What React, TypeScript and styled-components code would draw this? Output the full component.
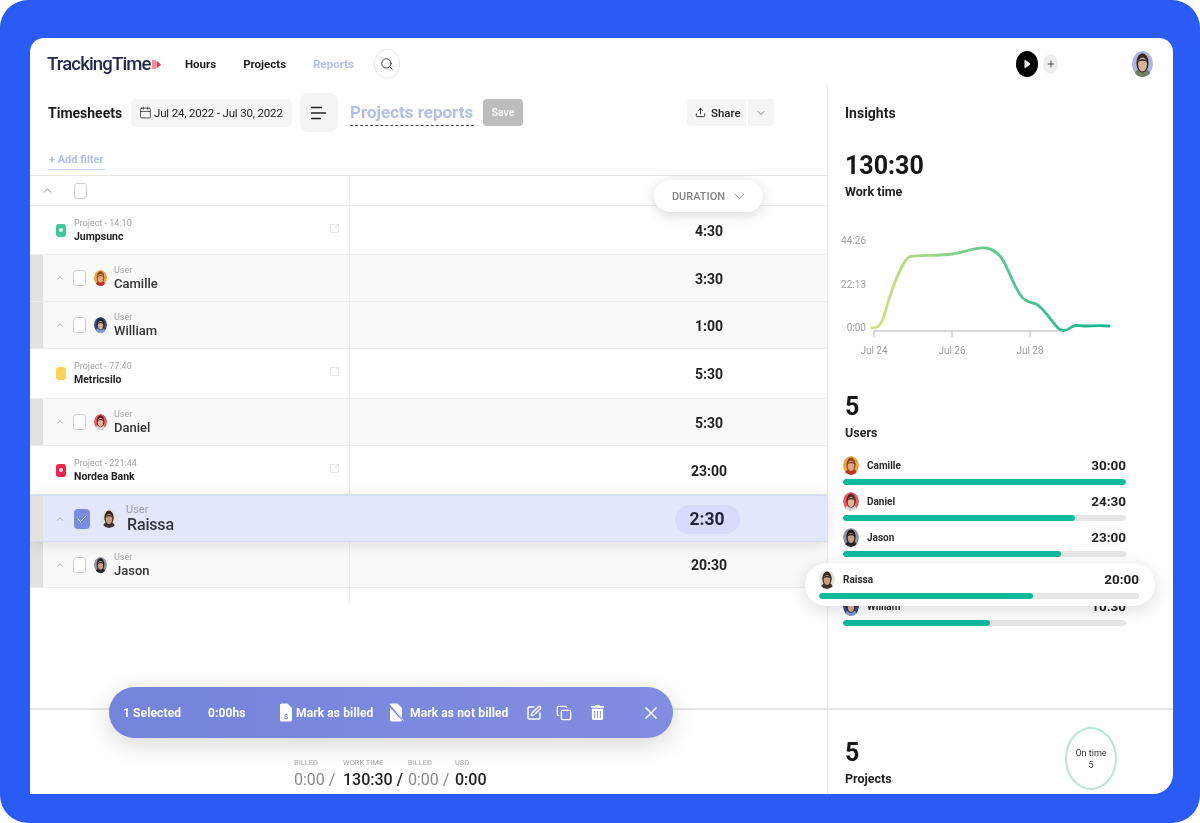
import * as React from 'react';
import styled, { createGlobalStyle } from 'styled-components';
import {
  Calendar,
  Check,
  ChevronDown,
  ChevronUp,
  Copy,
  Plus,
  Search,
  SquareArrowOutUpRight,
  SquarePen,
  Upload,
  X,
} from 'lucide-react';
import { FaTrashAlt } from 'react-icons/fa';

const GlobalStyle = createGlobalStyle`
  html, body { margin: 0; padding: 0; background: #fff; }
  body { font-family: 'Roboto', 'Liberation Sans', sans-serif; }
  * { box-sizing: border-box; }
`;

type Face = { bg: string; skin: string; hair: string; shirt: string };

const faces: Record<string, Face> = {
  camille: { bg: '#f0a63a', skin: '#e0a585', hair: '#8a4a22', shirt: '#b8352c' },
  william: { bg: '#34497c', skin: '#d9a98f', hair: '#1d1d2b', shirt: '#7f9bd0' },
  daniel: { bg: '#f0586a', skin: '#e2b39b', hair: '#4a2b20', shirt: '#d8d4d0' },
  raissa: { bg: '#e2e1dc', skin: '#c99a7c', hair: '#33261f', shirt: '#3c3330' },
  jason: { bg: '#8b929c', skin: '#c79c84', hair: '#1f1b1a', shirt: '#27282c' },
  me: { bg: '#a9b6e6', skin: '#dcb49c', hair: '#3a2a25', shirt: '#6f7f68' },
};

function Avatar({ face }: { face: string }) {
  const f = faces[face];
  return (
    <svg viewBox="0 0 24 24" width="100%" height="100%" preserveAspectRatio="none">
      <circle cx="12" cy="12" r="12" fill={f.bg} />
      <path d="M3 24c0-6 4-8 9-8s9 2 9 8z" fill={f.shirt} />
      <ellipse cx="12" cy="11" rx="7" ry="9" fill={f.hair} />
      <ellipse cx="12" cy="12.500" rx="5" ry="6.500" fill={f.skin} />
      <path d="M7 10c1-3.500 9-3.500 10 0-3.300-1.300-6.700-1.300-10 0z" fill={f.hair} />
    </svg>
  );
}

function LogoMark() {
  return (
    <svg width="9" height="11" viewBox="0 0 9 11">
      <rect x="0" y="1" width="4" height="9" rx="1" fill="#f58f9c" />
      <path d="M4.500 1.500 9 5.500l-4.500 4z" fill="#e8404f" />
    </svg>
  );
}

function MenuLines() {
  return (
    <svg width="16" height="14" viewBox="0 0 16 14">
      <path d="M0 1.500h11M0 7h15M0 12.500h10" stroke="#222" strokeWidth="1.700" fill="none" />
    </svg>
  );
}

function PlayGlyph() {
  return (
    <svg width="7" height="10" viewBox="0 0 7 10">
      <path d="M1 1l5 4-5 4z" fill="#fff" stroke="#fff" strokeLinejoin="round" />
    </svg>
  );
}

function BilledDoc({ crossed }: { crossed?: boolean }) {
  return (
    <svg width="15" height="19" viewBox="0 0 15 19">
      <path d="M2.500 0.500h6l4.500 4.500v12a1.500 1.500 0 0 1-1.500 1.500h-9A1.500 1.500 0 0 1 1 17V2A1.500 1.500 0 0 1 2.500 0.500z" fill="#fff" />
      {crossed ? (
        <>
          <path d="M0 2l15 16" stroke="#7b88dd" strokeWidth="2.200" />
          <path d="M0.500 0.500l14 17" stroke="#fff" strokeWidth="0.800" />
        </>
      ) : (
        <text x="7" y="15.500" fontSize="8" fontWeight="700" textAnchor="middle" fill="#7b88dd" fontFamily="Roboto, sans-serif">
          $
        </text>
      )}
    </svg>
  );
}

function WorkChart() {
  return (
    <svg width="287" height="135" viewBox="-5 0 287 135">
      <defs>
        <linearGradient id="workLine" x1="0" y1="0" x2="1" y2="0">
          <stop offset="0" stopColor="#d2e27f" />
          <stop offset="0.5" stopColor="#63c98e" />
          <stop offset="1" stopColor="#12b594" />
        </linearGradient>
      </defs>
      <g fontSize="10" fill="#a0a0a0" fontFamily="Roboto, sans-serif">
        <text x="22" y="14" textAnchor="end">44:26</text>
        <text x="22" y="58" textAnchor="end">22:13</text>
        <text x="22" y="101" textAnchor="end">0:00</text>
        <text x="30" y="124" textAnchor="middle">Jul 24</text>
        <text x="108" y="124" textAnchor="middle">Jul 26</text>
        <text x="186" y="124" textAnchor="middle">Jul 28</text>
      </g>
      <path d="M30 101H216M30 101v6M108 101v6M186 101v6" stroke="#b5b5b5" strokeWidth="1" fill="none" />
      <path
        d="M28 98C34 98 37 95 40 86C44 72 47 62 51 52C55 42 59 32 65 27C70 25 95 26 108 24C122 22 130 17 142 18C150 19 156 25 160 32C166 43 171 59 178 67C182 72 186 72 192 74C200 78 206 90 214 98C218 102 222 101 226 98C230 95 232 95 240 96C248 96 256 95 265 96"
        stroke="url(#workLine)"
        strokeWidth="2.800"
        strokeLinecap="round"
        fill="none"
      />
    </svg>
  );
}

type RowData =
  | { kind: 'project'; meta: string; name: string; swatch: string; dot?: boolean; time: string; height: number }
  | { kind: 'user'; face: string; name: string; time: string; height: number };

const rows: RowData[] = [
  { kind: 'project', meta: 'Project - 14:10', name: 'Jumpsunc', swatch: '#3fc596', dot: true, time: '4:30', height: 49 },
  { kind: 'user', face: 'camille', name: 'Camille', time: '3:30', height: 47 },
  { kind: 'user', face: 'william', name: 'William', time: '1:00', height: 47 },
  { kind: 'project', meta: 'Project - 77:40', name: 'Metricsilo', swatch: '#fbd25c', time: '5:30', height: 50 },
  { kind: 'user', face: 'daniel', name: 'Daniel', time: '5:30', height: 47 },
  { kind: 'project', meta: 'Project - 221:44', name: 'Nordea Bank', swatch: '#f0244e', dot: true, time: '23:00', height: 49 },
];

const insightUsers = [
  { face: 'camille', name: 'Camille', time: '30:00', pct: 100 },
  { face: 'daniel', name: 'Daniel', time: '24:30', pct: 82 },
  { face: 'jason', name: 'Jason', time: '23:00', pct: 77 },
];

function UserCells({ face, name }: { face: string; name: string }) {
  return (
    <NameCell $user>
      <Strip />
      <SmallChevron><ChevronUp size={10} strokeWidth={1.5} /></SmallChevron>
      <Checkbox />
      <RowAvatar><Avatar face={face} /></RowAvatar>
      <Labels>
        <Meta>User</Meta>
        <UserName>{name}</UserName>
      </Labels>
    </NameCell>
  );
}

export default function App() {
  return (
    <>
      <GlobalStyle />
      <Frame>
        <Card>
          <TopBar>
            <Brand>
              <LogoText>TrackingTime</LogoText>
              <LogoMark />
            </Brand>
            <Nav>
              <NavLink>Hours</NavLink>
              <NavLink>Projects</NavLink>
              <NavLink $muted>Reports</NavLink>
            </Nav>
            <SearchButton><Search size={14} strokeWidth={1.6} /></SearchButton>
            <TopRight>
              <PlayButton><PlayGlyph /></PlayButton>
              <PlusChip><Plus size={10} strokeWidth={2} /></PlusChip>
              <MeAvatar><Avatar face="me" /></MeAvatar>
            </TopRight>
          </TopBar>

          <Body>
            <Main>
              <Toolbar>
                <PageTitle>Timesheets</PageTitle>
                <DatePill>
                  <Calendar size={13} strokeWidth={1.4} />
                  Jul 24, 2022 - Jul 30, 2022
                </DatePill>
                <MenuButton><MenuLines /></MenuButton>
                <ReportTitle>Projects reports</ReportTitle>
                <SaveButton>Save</SaveButton>
                <ShareGroup>
                  <ShareButton><Upload size={11} strokeWidth={2} /> Share</ShareButton>
                  <ShareCaret><ChevronDown size={12} strokeWidth={1.5} /></ShareCaret>
                </ShareGroup>
              </Toolbar>
              <FilterLine>
                <AddFilter>+ Add filter</AddFilter>
              </FilterLine>

              <HeadRow>
                <HeadCell>
                  <ChevronUp size={13} strokeWidth={1.5} color="#777" />
                  <Checkbox />
                </HeadCell>
                <DurationPill>
                  DURATION <ChevronDown size={17} strokeWidth={1.4} />
                </DurationPill>
              </HeadRow>

              {rows.map((row) => (
                <Row key={row.name} $user={row.kind === 'user'} $height={row.height}>
                  {row.kind === 'project' ? (
                    <NameCell>
                      <Swatch $color={row.swatch}>{row.dot && <SwatchDot />}</Swatch>
                      <Labels>
                        <Meta>{row.meta}</Meta>
                        <ProjectName>{row.name}</ProjectName>
                      </Labels>
                      <OpenLink><SquareArrowOutUpRight size={11} strokeWidth={1.3} /></OpenLink>
                    </NameCell>
                  ) : (
                    <UserCells face={row.face} name={row.name} />
                  )}
                  <Duration>{row.time}</Duration>
                </Row>
              ))}

              <SelectedRow>
                <SelectedName>
                  <Strip />
                  <SmallChevron><ChevronUp size={10} strokeWidth={1.5} /></SmallChevron>
                  <CheckedBox><Check size={12} strokeWidth={2} color="#fff" /></CheckedBox>
                  <SelectedAvatar><Avatar face="raissa" /></SelectedAvatar>
                  <Labels>
                    <SelectedMeta>User</SelectedMeta>
                    <SelectedUser>Raissa</SelectedUser>
                  </Labels>
                </SelectedName>
                <Duration><TimePill>2:30</TimePill></Duration>
              </SelectedRow>

              <Row $user $height={46}>
                <UserCells face="jason" name="Jason" />
                <Duration>20:30</Duration>
              </Row>
              <TableTail />

              <Footer>
                <TotalLabel>BILLED</TotalLabel>
                <TotalLabel>WORK TIME</TotalLabel>
                <TotalLabel>BILLED</TotalLabel>
                <TotalLabel>USD</TotalLabel>
                <TotalValue $dim>0:00 /</TotalValue>
                <TotalValue>130:30 /</TotalValue>
                <TotalValue $dim>0:00 /</TotalValue>
                <TotalValue>0:00</TotalValue>
              </Footer>

              <SelectionBar>
                <BarText $width={85}>1 Selected</BarText>
                <BarText $width={71}>0:00hs</BarText>
                <BarAction $width={110} $gap={2}><BilledDoc /> Mark as billed</BarAction>
                <BarAction $width={137} $gap={6}><BilledDoc crossed /> Mark as not billed</BarAction>
                <BarIcon $width={30}><SquarePen size={16} strokeWidth={2.2} /></BarIcon>
                <BarIcon $width={34}><Copy size={16} strokeWidth={2} /></BarIcon>
                <BarIcon $width={51}><FaTrashAlt size={15} /></BarIcon>
                <BarIcon $width={20}><X size={20} strokeWidth={2} /></BarIcon>
              </SelectionBar>
            </Main>

            <Side>
              <SideTop>
                <SideTitle>Insights</SideTitle>
                <BigTime>130:30</BigTime>
                <SubLabel>Work time</SubLabel>
                <ChartBox><WorkChart /></ChartBox>
                <BigCount>5</BigCount>
                <SubLabel>Users</SubLabel>
                <UserList>
                  {insightUsers.map((u) => (
                    <UserStat key={u.name}>
                      <StatLine>
                        <StatAvatar><Avatar face={u.face} /></StatAvatar>
                        <StatName>{u.name}</StatName>
                        <StatTime>{u.time}</StatTime>
                      </StatLine>
                      <Track><Fill style={{ width: `${u.pct}%` }} /></Track>
                    </UserStat>
                  ))}
                  <RaisedSlot>
                    <RaisedCard>
                      <StatLine>
                        <StatAvatar><Avatar face="raissa" /></StatAvatar>
                        <StatName>Raissa</StatName>
                        <StatTime>20:00</StatTime>
                      </StatLine>
                      <Track><Fill style={{ width: '67%' }} /></Track>
                    </RaisedCard>
                  </RaisedSlot>
                  <UserStat>
                    <StatLine>
                      <StatAvatar><Avatar face="william" /></StatAvatar>
                      <StatName>William</StatName>
                      <StatTime>10:30</StatTime>
                    </StatLine>
                    <Track><Fill style={{ width: '52%' }} /></Track>
                  </UserStat>
                </UserList>
              </SideTop>
              <SideBottom>
                <div>
                  <BigCount>5</BigCount>
                  <SubLabel>Projects</SubLabel>
                </div>
                <OnTime>On time<br />5</OnTime>
              </SideBottom>
            </Side>
          </Body>
        </Card>
      </Frame>
    </>
  );
}

const Frame = styled.div`
  width: 1200px;
  height: 823px;
  padding: 38px 27px 29px 30px;
  background: #2a5bf5;
  border-radius: 28px;
  overflow: hidden;
  filter: blur(0.4px);
`;
const Card = styled.div`
  display: flex;
  flex-direction: column;
  height: 100%;
  background: #fff;
  border-radius: 14px 14px 20px 0;
  overflow: hidden;
  color: #222;
`;
const TopBar = styled.div`
  flex: none;
  display: flex;
  align-items: center;
  height: 46px;
  padding: 6px 20px 0 17px;
`;
const Brand = styled.div`
  display: flex;
  align-items: center;
  gap: 1px;
  width: 138px;
`;
const LogoText = styled.span`
  font-size: 18.500px;
  font-weight: 500;
  letter-spacing: -0.045em;
  color: #262a4a;
`;
const Nav = styled.nav`
  display: flex;
  gap: 27px;
  width: 189px;
`;
const NavLink = styled.span<{ $muted?: boolean }>`
  font-size: 11.500px;
  font-weight: 700;
  color: ${(p) => (p.$muted ? '#b4bee9' : '#1c1c1c')};
`;
const SearchButton = styled.div`
  display: flex;
  align-items: center;
  justify-content: center;
  width: 26px;
  height: 30px;
  border: 1px solid #e8e8e8;
  border-radius: 50%;
  color: #333;
`;
const TopRight = styled.div`
  display: flex;
  align-items: center;
  margin-left: auto;
`;
const PlayButton = styled.div`
  display: flex;
  align-items: center;
  justify-content: center;
  width: 22px;
  height: 26px;
  border-radius: 50%;
  background: #000;
`;
const PlusChip = styled.div`
  display: flex;
  align-items: center;
  justify-content: center;
  width: 15px;
  height: 20px;
  margin: 0 74px 0 5px;
  border-radius: 50%;
  background: #eee;
  color: #333;
`;
const MeAvatar = styled.div`
  width: 21px;
  height: 26px;
  border-radius: 50%;
  overflow: hidden;
`;
const Body = styled.div`
  flex: 1;
  min-height: 0;
  display: grid;
  grid-template-columns: 797px 346px;
`;
const Main = styled.div`
  position: relative;
  display: flex;
  flex-direction: column;
`;
const Toolbar = styled.div`
  flex: none;
  display: flex;
  align-items: center;
  height: 57px;
  padding: 0 53px 0 18px;
`;
const PageTitle = styled.h1`
  width: 83px;
  margin: 0;
  font-size: 14px;
  font-weight: 700;
  color: #1b1b1b;
`;
const DatePill = styled.div`
  display: flex;
  align-items: center;
  gap: 2px;
  width: 161px;
  height: 28px;
  padding-left: 8px;
  border-radius: 5px;
  background: #f5f5f6;
  font-size: 11.500px;
  letter-spacing: -0.015em;
  white-space: nowrap;
  color: #222;
`;
const MenuButton = styled.div`
  display: flex;
  align-items: center;
  justify-content: center;
  width: 38px;
  height: 39px;
  margin: 0 12px 0 8px;
  border-radius: 8px;
  background: #f4f4f5;
`;
const ReportTitle = styled.div`
  width: 124px;
  height: 27px;
  margin-right: 9px;
  border-bottom: 1px dashed #444;
  font-size: 17px;
  line-height: 26px;
  font-weight: 700;
  white-space: nowrap;
  color: #b4bee9;
`;
const SaveButton = styled.div`
  display: flex;
  align-items: center;
  justify-content: center;
  width: 40px;
  height: 27px;
  border-radius: 4px;
  background: #bdbdbd;
  font-size: 10.500px;
  font-weight: 700;
  color: #f4f4f4;
`;
const ShareGroup = styled.div`
  display: flex;
  gap: 2px;
  margin-left: auto;
`;
const ShareButton = styled.div`
  display: flex;
  align-items: center;
  gap: 5px;
  width: 59px;
  height: 27px;
  padding-left: 8px;
  border-radius: 4px 0 0 4px;
  background: #f5f5f6;
  font-size: 11.500px;
  font-weight: 500;
  color: #222;
`;
const ShareCaret = styled.div`
  display: flex;
  align-items: center;
  justify-content: center;
  width: 26px;
  height: 27px;
  border-radius: 0 4px 4px 0;
  background: #f5f5f6;
  color: #555;
`;
const FilterLine = styled.div`
  flex: none;
  height: 34px;
  padding: 7px 0 0 18px;
`;
const AddFilter = styled.span`
  display: inline-block;
  padding: 0 1px 3px 1px;
  border-bottom: 1px solid #c3cbee;
  font-size: 11px;
  line-height: 13px;
  font-weight: 700;
  color: #b4bee9;
`;
const HeadRow = styled.div`
  position: relative;
  flex: none;
  height: 31px;
  border-top: 1px solid #e6e6e6;
  border-bottom: 1px solid #ececec;
`;
const HeadCell = styled.div`
  display: flex;
  align-items: center;
  gap: 20px;
  width: 320px;
  height: 100%;
  padding-left: 11px;
  border-right: 1px solid #ececec;
`;
const DurationPill = styled.div`
  position: absolute;
  top: 4px;
  left: 624px;
  z-index: 2;
  display: flex;
  align-items: center;
  justify-content: center;
  gap: 6px;
  width: 109px;
  height: 32px;
  padding-left: 3px;
  border-radius: 16px;
  background: #fff;
  box-shadow: 0 3px 14px rgba(0, 0, 0, 0.16);
  font-size: 11px;
  font-weight: 500;
  color: #858585;
`;
const Row = styled.div<{ $user?: boolean; $height: number }>`
  flex: none;
  display: grid;
  grid-template-columns: 320px 1fr;
  height: ${(p) => p.$height}px;
  background: ${(p) => (p.$user ? '#f9f9f9' : '#fff')};
  border-bottom: 1px solid #ececec;
`;
const NameCell = styled.div<{ $user?: boolean }>`
  display: flex;
  align-items: center;
  padding-left: ${(p) => (p.$user ? '0' : '26px')};
  border-right: 1px solid #ececec;
`;
const Strip = styled.div`
  flex: none;
  align-self: stretch;
  width: 13px;
  margin-right: 11px;
  background: #e2e2e2;
`;
const SmallChevron = styled.div`
  display: flex;
  width: 19px;
  padding-left: 1px;
  color: #888;
`;
const Checkbox = styled.div`
  flex: none;
  width: 13px;
  height: 16px;
  border: 1px solid #cfcfcf;
  border-radius: 3px;
  background: #fff;
`;
const RowAvatar = styled.div`
  flex: none;
  width: 13px;
  height: 16px;
  margin: 0 7px 0 8px;
  border-radius: 50%;
  overflow: hidden;
`;
const Labels = styled.div`
  display: flex;
  flex-direction: column;
`;
const Meta = styled.span`
  font-size: 9px;
  line-height: 11px;
  color: #a3a3a3;
`;
const UserName = styled.span`
  font-size: 13px;
  line-height: 15px;
  font-weight: 500;
  color: #333;
`;
const ProjectName = styled.span`
  margin-top: 2px;
  font-size: 10.500px;
  line-height: 12px;
  font-weight: 700;
  color: #222;
`;
const Swatch = styled.div<{ $color: string }>`
  flex: none;
  display: flex;
  align-items: center;
  justify-content: center;
  width: 10px;
  height: 13px;
  margin-right: 8px;
  border-radius: 3px;
  background: ${(p) => p.$color};
`;
const SwatchDot = styled.div`
  width: 4px;
  height: 4px;
  border-radius: 50%;
  background: rgba(255, 255, 255, 0.85);
`;
const OpenLink = styled.div`
  display: flex;
  margin: -4px 9px 0 auto;
  color: #cfcfcf;
`;
const Duration = styled.div`
  display: flex;
  align-items: center;
  justify-content: center;
  padding: 1px 0 0 241px;
  font-size: 14px;
  font-weight: 700;
  color: #222;
`;
const SelectedRow = styled.div`
  position: relative;
  z-index: 1;
  flex: none;
  display: grid;
  grid-template-columns: 320px 1fr;
  height: 47px;
  background: #e3e7fb;
  border-top: 1px solid #d6dbf5;
  border-bottom: 1px solid #d6dbf5;
  box-shadow: 0 2px 14px rgba(0, 0, 0, 0.12);
`;
const SelectedName = styled.div`
  display: flex;
  align-items: center;
`;
const CheckedBox = styled.div`
  flex: none;
  display: flex;
  align-items: center;
  justify-content: center;
  width: 16px;
  height: 20px;
  margin-left: 1px;
  border-radius: 4px;
  background: #7b8cde;
`;
const SelectedAvatar = styled.div`
  flex: none;
  width: 16px;
  height: 19px;
  margin: 0 9px 0 11px;
  border-radius: 50%;
  overflow: hidden;
`;
const SelectedMeta = styled.span`
  font-size: 11px;
  line-height: 13px;
  color: #9a9cab;
`;
const SelectedUser = styled.span`
  padding-left: 1px;
  font-size: 16px;
  line-height: 18px;
  font-weight: 500;
  letter-spacing: -0.01em;
  color: #33363f;
`;
const TimePill = styled.span`
  display: flex;
  align-items: center;
  justify-content: center;
  width: 65px;
  height: 29px;
  margin-right: 4px;
  border-radius: 15px;
  background: #d6dcf9;
  font-size: 17.500px;
  font-weight: 700;
  color: #1f2540;
`;
const TableTail = styled.div`
  flex: none;
  width: 320px;
  height: 17px;
  border-right: 1px solid #ececec;
`;
const Footer = styled.div`
  flex: none;
  display: grid;
  grid-template-columns: 49px 65px 47px auto;
  align-content: end;
  height: 86px;
  margin-top: auto;
  padding: 0 0 4px 264px;
  border-top: 2px solid #e6e6e6;
`;
const TotalLabel = styled.span`
  font-size: 7.500px;
  line-height: 11px;
  color: #a6a6a6;
`;
const TotalValue = styled.span<{ $dim?: boolean }>`
  margin-top: 2px;
  font-size: 16px;
  line-height: 20px;
  font-weight: ${(p) => (p.$dim ? 400 : 500)};
  white-space: nowrap;
  color: ${(p) => (p.$dim ? '#8a8a8a' : '#222')};
`;
const SelectionBar = styled.div`
  position: absolute;
  left: 79px;
  top: 603px;
  z-index: 3;
  display: flex;
  align-items: center;
  width: 564px;
  height: 51px;
  padding-left: 14px;
  border-radius: 26px;
  background: linear-gradient(90deg, #7484db, #818de0);
  box-shadow: 0 6px 24px rgba(0, 0, 0, 0.16);
  color: #fff;
`;
const BarText = styled.span<{ $width: number }>`
  width: ${(p) => p.$width}px;
  font-size: 12px;
  font-weight: 700;
  letter-spacing: 0.01em;
`;
const BarAction = styled(BarText)<{ $gap: number }>`
  display: flex;
  align-items: center;
  gap: ${(p) => p.$gap}px;
  white-space: nowrap;
`;
const BarIcon = styled.div<{ $width: number }>`
  display: flex;
  width: ${(p) => p.$width}px;
`;
const Side = styled.aside`
  display: flex;
  flex-direction: column;
  border-left: 1px solid #ececec;
`;
const SideTop = styled.div`
  flex: 1;
  min-height: 0;
  padding: 21px 46px 0 17px;
`;
const SideTitle = styled.h2`
  margin: 0 0 30px;
  font-size: 14px;
  line-height: 17px;
  font-weight: 700;
  color: #1f1f1f;
`;
const BigTime = styled.div`
  font-size: 25px;
  line-height: 28px;
  font-weight: 700;
  color: #161616;
`;
const BigCount = styled(BigTime)``;
const SubLabel = styled.div`
  margin-top: 4px;
  font-size: 12.500px;
  line-height: 15px;
  font-weight: 700;
  color: #222;
`;
const ChartBox = styled.div`
  height: 194px;
  margin-left: -6px;
  padding-top: 31px;
`;
const UserList = styled.div`
  position: relative;
  margin: 13px 1px 0 -2px;
`;
const UserStat = styled.div`
  height: 36px;
  &:last-child { height: 33px; }
`;
const StatLine = styled.div`
  display: flex;
  align-items: center;
  height: 24px;
  margin-bottom: 2px;
`;
const StatAvatar = styled.div`
  flex: none;
  width: 16px;
  height: 19px;
  margin-right: 8px;
  border-radius: 50%;
  overflow: hidden;
`;
const StatName = styled.span`
  font-size: 10px;
  font-weight: 700;
  color: #2a2a2a;
`;
const StatTime = styled.span`
  margin-left: auto;
  font-size: 13.500px;
  font-weight: 700;
  color: #222;
`;
const Track = styled.div`
  height: 6px;
  border-radius: 3px;
  background: #e6e6e6;
  overflow: hidden;
`;
const Fill = styled.div`
  height: 100%;
  border-radius: 3px;
  background: #10b99a;
`;
const RaisedSlot = styled.div`
  position: relative;
  height: 33px;
`;
const RaisedCard = styled.div`
  position: absolute;
  top: 2px;
  left: -38px;
  z-index: 2;
  width: 350px;
  height: 43px;
  padding: 4px 16px 0 14px;
  border-radius: 22px;
  background: #fff;
  box-shadow: 0 4px 18px rgba(0, 0, 0, 0.14);
`;
const SideBottom = styled.div`
  flex: none;
  display: flex;
  justify-content: space-between;
  height: 86px;
  padding: 29px 56px 0 17px;
  border-top: 2px solid #e6e6e6;
`;
const OnTime = styled.div`
  display: flex;
  align-items: center;
  justify-content: center;
  width: 52px;
  height: 63px;
  margin-top: -12px;
  border: 2px solid #b7e5d7;
  border-radius: 50%;
  font-size: 9px;
  line-height: 12px;
  text-align: center;
  color: #333;
`;
